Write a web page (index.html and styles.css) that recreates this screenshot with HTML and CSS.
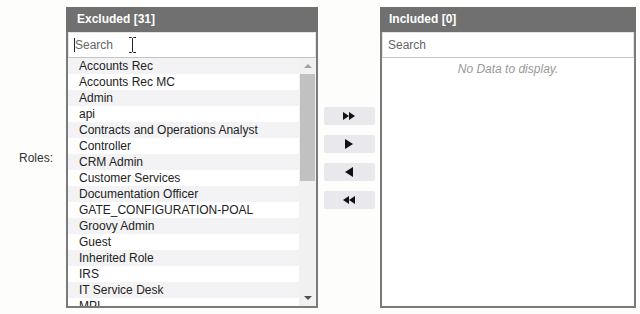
FILE: index.html
```html
<!DOCTYPE html>
<html lang="en">
<head>
    <meta charset="UTF-8">
    <title>Roles</title>
    <link rel="stylesheet" href="styles.css">
</head>
<body>
    <div class="page">
        <div class="label">Roles:</div>

        <div class="panel left">
            <div class="panel-head">Excluded [31]</div>
            <div class="search">
                <span class="caret"></span><span class="placeholder">Search</span>
                <svg class="ibeam" width="9" height="16" viewBox="0 0 9 16">
                    <path d="M1 0.5h2.5l1 1 1-1H8M4.5 1.5v13M1 15.5h2.5l1-1 1 1H8" fill="none" stroke="#222" stroke-width="1"/>
                </svg>
            </div>
            <div class="list">
                <div class="rows">
                    <div class="row">Accounts Rec</div>
                    <div class="row">Accounts Rec MC</div>
                    <div class="row">Admin</div>
                    <div class="row">api</div>
                    <div class="row">Contracts and Operations Analyst</div>
                    <div class="row">Controller</div>
                    <div class="row">CRM Admin</div>
                    <div class="row">Customer Services</div>
                    <div class="row">Documentation Officer</div>
                    <div class="row">GATE_CONFIGURATION-POAL</div>
                    <div class="row">Groovy Admin</div>
                    <div class="row">Guest</div>
                    <div class="row">Inherited Role</div>
                    <div class="row">IRS</div>
                    <div class="row">IT Service Desk</div>
                    <div class="row">MPI</div>
                </div>
                <div class="scrollbar">
                    <div class="sb-btn"><span class="arrow-up"></span></div>
                    <div class="sb-thumb"></div>
                    <div class="sb-track"></div>
                    <div class="sb-btn"><span class="arrow-down"></span></div>
                </div>
            </div>
        </div>

        <div class="mid">
            <button class="move"><span class="tri-r"></span><span class="tri-r"></span></button>
            <button class="move"><span class="tri-r big"></span></button>
            <button class="move"><span class="tri-l big"></span></button>
            <button class="move"><span class="tri-l"></span><span class="tri-l"></span></button>
        </div>

        <div class="panel right">
            <div class="panel-head">Included [0]</div>
            <div class="search">
                <span class="placeholder">Search</span>
            </div>
            <div class="list empty">
                <div class="nodata">No Data to display.</div>
            </div>
        </div>
    </div>
</body>
</html>
```

FILE: styles.css
```css
body {
    margin: 0;
    background-color: #fdfdfb;
    font-family: "Liberation Sans", Arial, sans-serif;
    font-size: 12px;
    color: #222;
}

.page {
    display: flex;
    padding-top: 7px;
}

.label {
    width: 66px;
    box-sizing: border-box;
    padding-right: 13px;
    text-align: right;
    align-self: center;
    color: #333;
}

.panel {
    height: 301px;
    box-sizing: border-box;
    border: 2px solid #7a7a7a;
    border-top-width: 0;
    background-color: #fff;
    display: flex;
    flex-direction: column;
}

.panel.left {
    width: 252px;
}

.panel.right {
    width: 256px;
}

.panel-head {
    height: 25px;
    line-height: 24px;
    background-color: #707070;
    color: #fff;
    font-weight: bold;
    padding-left: 9px;
    margin: 0 -2px;
}

.left .panel-head {
    padding-left: 11px;
}

.search {
    position: relative;
    height: 24px;
    line-height: 24px;
    border: 1px solid #e4e4e4;
    border-bottom-color: #c4c4c4;
    padding-left: 5px;
    color: #666;
    display: flex;
    align-items: center;
}

.caret {
    display: inline-block;
    width: 1px;
    height: 14px;
    background-color: #222;
}

.ibeam {
    position: absolute;
    left: 59px;
    top: 4px;
}

.list {
    flex: 1;
    display: flex;
    overflow: hidden;
}

.rows {
    flex: 1;
}

.row {
    height: 16px;
    line-height: 16px;
    padding-left: 11px;
    white-space: nowrap;
}

.row:nth-child(odd) {
    background-color: #f3f3f5;
}

.scrollbar {
    width: 17px;
    background-color: #f1f1f1;
    display: flex;
    flex-direction: column;
}

.sb-btn {
    height: 16px;
    display: flex;
    justify-content: center;
    align-items: center;
}

.sb-thumb {
    height: 107px;
    margin: 0 1px;
    background-color: #c1c1c1;
}

.sb-track {
    flex: 1;
}

.arrow-up {
    border-left: 4px solid transparent;
    border-right: 4px solid transparent;
    border-bottom: 4px solid #a3a3a3;
}

.arrow-down {
    border-left: 4px solid transparent;
    border-right: 4px solid transparent;
    border-top: 4px solid #505050;
}

.mid {
    width: 62px;
    display: flex;
    flex-direction: column;
    justify-content: center;
    align-items: center;
    gap: 10px;
}

.move {
    width: 51px;
    height: 18px;
    border: none;
    border-radius: 2px;
    background-color: #e9e9ed;
    display: flex;
    justify-content: center;
    align-items: center;
    padding: 0;
}

.tri-r {
    border-top: 4px solid transparent;
    border-bottom: 4px solid transparent;
    border-left: 6px solid #111;
}

.tri-l {
    border-top: 4px solid transparent;
    border-bottom: 4px solid transparent;
    border-right: 6px solid #111;
}

.tri-r.big {
    border-top-width: 5px;
    border-bottom-width: 5px;
    border-left-width: 8px;
}

.tri-l.big {
    border-top-width: 5px;
    border-bottom-width: 5px;
    border-right-width: 8px;
}

.list.empty {
    justify-content: center;
    align-items: flex-start;
}

.nodata {
    padding-top: 4px;
    color: #999;
    font-style: italic;
}
```
